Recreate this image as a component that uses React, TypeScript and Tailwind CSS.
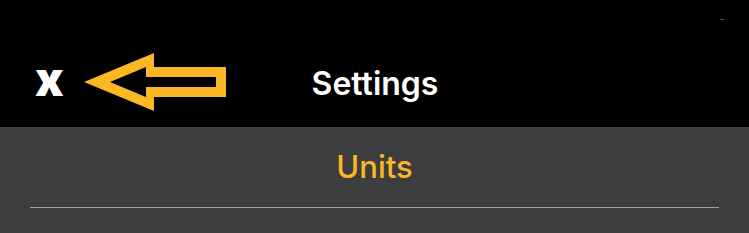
import React from "react";

export default function App() {
  return (
    <div className="w-[749px] h-[233px] bg-[#3c3d3f] overflow-hidden" style={{ fontFamily: "Inter, 'Noto Sans', sans-serif" }}>
      <div className="relative h-[127px] bg-black">
        <div className="flex justify-end pt-[19px] pr-[25px]">
          <div className="w-[4px] h-[1px] bg-[#555]" />
        </div>
        <div className="grid grid-cols-[1fr_auto_1fr] items-center h-[36px] mt-[45px]">
          <span className="pl-[35px] text-white font-black text-[47px] leading-none -mt-[10px]">x</span>
          <span className="text-center text-white font-semibold text-[32px] leading-[36px] pl-[1px]">Settings</span>
          <span />
        </div>
        <svg className="absolute left-0 top-0" width="240" height="127" viewBox="0 0 240 127">
          <path
            fillRule="evenodd"
            fill="#fbb724"
            d="M84 82 L154 53 L154 67 L226 67 L226 97 L154 97 L154 111 Z M110 82 L146 67 L146 77 L216 77 L216 87 L146 87 L146 97 Z"
          />
        </svg>
      </div>
      <div className="pt-[22px]">
        <div className="text-center text-[#fbb724] font-medium text-[31px] leading-[36px]">Units</div>
        <div className="mx-[30px] mt-[22px] h-px bg-[#a3a3a3]" />
      </div>
    </div>
  );
}
